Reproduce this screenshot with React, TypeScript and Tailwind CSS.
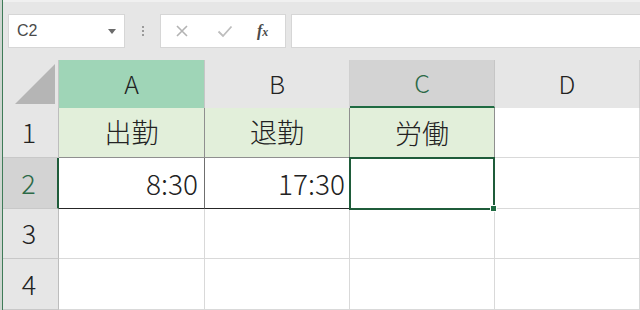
import React from "react";

const FONT = { fontFamily: '"Noto Sans CJK JP", "Noto Sans", sans-serif' };

const cols = ["A", "B", "C", "D"];

const HeaderCell = ({ label }: { label: string }) => {
  if (label === "A")
    return (
      <div className="flex items-center justify-center bg-[#9fd5b7] border-r border-[#c6c6c6] text-[25px] font-light text-[#222]">
        {label}
      </div>
    );
  if (label === "C")
    return (
      <div className="flex items-center justify-center bg-[#d3d3d3] border-r border-[#c6c6c6] border-b-2 border-b-[#1f6b42] text-[25px] font-light text-[#2c6a47]">
        {label}
      </div>
    );
  return (
    <div className="flex items-center justify-center bg-[#e6e6e6] border-r border-[#d0d0d0] text-[25px] font-light text-[#222]">
      {label}
    </div>
  );
};

const RowHead = ({ n, active }: { n: number; active?: boolean }) =>
  active ? (
    <div className="flex items-center justify-center bg-[#d3d3d3] border-b border-[#c8c8c8] border-r-2 border-r-[#1f5c3a] text-[27px] font-light text-[#2c6a47]">
      {n}
    </div>
  ) : (
    <div className="flex items-center justify-center bg-[#e6e6e6] border-b border-[#c8c8c8] border-r border-r-[#bdbdbd] text-[27px] font-light text-[#222]">
      {n}
    </div>
  );

const Empty = () => (
  <div className="border-r border-b border-[#d9d9d9] bg-white" />
);

export default function App() {
  return (
    <div className="relative w-[640px] h-[310px] overflow-hidden bg-[#e6e6e6]" style={FONT}>
      {/* left window edge */}
      <div className="absolute left-0 top-0 bottom-0 w-[2px] bg-[#cfd6d1]" />
      <div className="absolute left-[2px] top-0 bottom-0 w-px bg-[#3f7b58]" />

      {/* formula bar */}
      <div className="h-[60px] flex items-start pt-[12px] pl-[8px] border-t-[2px] border-[#f0f0f0]">
        <div className="w-[117px] h-[34px] bg-white border border-[#d6d6d6] flex items-center pl-[8px] pr-[8px] justify-between">
          <span className="text-[16px] text-[#4a4a4a]" style={{ fontFamily: '"Liberation Sans", sans-serif' }}>C2</span>
          <svg width="8" height="5" viewBox="0 0 8 5" className="mt-[1px]">
            <path d="M0 0 L8 0 L4 5 Z" fill="#6b6b6b" />
          </svg>
        </div>
        <div className="w-[35px] h-[34px] flex flex-col items-center justify-center gap-[2px]">
          <span className="block w-[2px] h-[2px] bg-[#9a9a9a]" />
          <span className="block w-[2px] h-[2px] bg-[#9a9a9a]" />
          <span className="block w-[2px] h-[2px] bg-[#9a9a9a]" />
        </div>
        <div className="w-[126px] h-[34px] bg-white border border-[#d6d6d6] flex items-center">
          <svg width="14" height="14" viewBox="0 0 14 14" className="ml-[14px]">
            <path d="M2 2 L12 12 M12 2 L2 12" stroke="#b3b3b3" strokeWidth="1.6" />
          </svg>
          <svg width="16" height="14" viewBox="0 0 16 14" className="ml-[28px]">
            <path d="M1.5 7.5 L6 12 L14.5 2.5" stroke="#bdbdbd" strokeWidth="1.8" fill="none" />
          </svg>
          <span
            className="ml-[24px] text-[16px] italic font-bold text-[#4a4a4a] leading-none"
            style={{ fontFamily: '"Liberation Serif", serif' }}
          >
            f<span className="text-[12px]">x</span>
          </span>
        </div>
        <div className="ml-[5px] flex-1 h-[34px] bg-white border border-[#d6d6d6] border-r-0" />
      </div>

      {/* sheet */}
      <div className="grid grid-cols-[59px_146px_145px_145px_145px] grid-rows-[48px_50px_51px_50px_51px]">
        {/* corner */}
        <div className="flex items-end justify-end pr-[3px] pb-[4px] bg-[#e6e6e6] border-r border-[#c6c6c6]">
          <svg width="40" height="40" viewBox="0 0 40 40">
            <path d="M40 0 L40 40 L0 40 Z" fill="#b5b5b5" />
          </svg>
        </div>
        {cols.map((c) => (
          <HeaderCell key={c} label={c} />
        ))}

        {/* row 1 */}
        <RowHead n={1} />
        <div className="flex items-center justify-center bg-[#e2efda] border-r border-b border-[#8f8f8f] text-[27px] font-light text-[#222]">
          出勤
        </div>
        <div className="flex items-center justify-center bg-[#e2efda] border-r border-b border-[#8f8f8f] text-[27px] font-light text-[#222]">
          退勤
        </div>
        <div className="flex items-center justify-center bg-[#e2efda] border-r border-[#8f8f8f] text-[27px] font-light text-[#222]">
          労働
        </div>
        <Empty />

        {/* row 2 */}
        <RowHead n={2} active />
        <div className="flex items-center justify-end pr-[6px] bg-white border-r border-r-[#6f6f6f] border-b border-b-[#262626] text-[28px] font-light text-[#222]">
          8:30
        </div>
        <div className="flex items-center justify-end pr-[5px] bg-white border-b border-b-[#262626] text-[28px] font-light text-[#222]">
          17:30
        </div>
        <div className="relative bg-white border-2 border-[#1f5c3a] -ml-px -mt-px -mb-px">
          <span className="absolute -right-[4px] -bottom-[4px] w-[7px] h-[7px] bg-[#1f6b42] border border-white" />
        </div>
        <Empty />

        {/* rows 3, 4 */}
        <RowHead n={3} />
        <Empty />
        <Empty />
        <Empty />
        <Empty />
        <RowHead n={4} />
        <Empty />
        <Empty />
        <Empty />
        <Empty />
      </div>
    </div>
  );
}
